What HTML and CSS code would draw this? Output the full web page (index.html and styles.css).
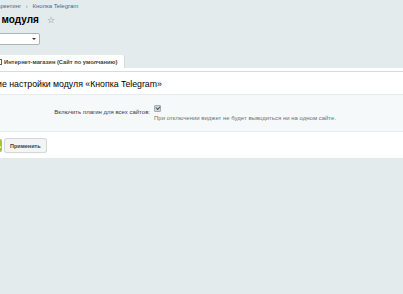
FILE: index.html
```html
<!DOCTYPE html>
<html lang="ru">
<head>
    <meta charset="UTF-8">
    <title>Настройки модуля</title>
    <link rel="stylesheet" href="styles.css">
</head>
<body>
    <div class="admin">
        <div class="crumbs">
            <a href="#">Маркетинг</a> <span class="sep">›</span> <a href="#">Кнопка Telegram</a>
        </div>

        <h1 class="title">Настройки модуля <span class="star">☆</span></h1>

        <div class="site-select">
            <span class="site-name">Интернет-магазин</span>
            <span class="arrow"></span>
        </div>

        <div class="tabs">
            <span class="tab"><span class="tab-icon"></span>Интернет-магазин (Сайт по умолчанию)</span>
        </div>

        <div class="panel">
            <h2 class="panel-title">Общие настройки модуля «Кнопка Telegram»</h2>

            <div class="field-row">
                <div class="field-label">Включить плагин для всех сайтов:</div>
                <div class="field-value">
                    <span class="check"></span>
                    <div class="hint">При отключении виджет не будет выводиться ни на одном сайте.</div>
                </div>
            </div>

            <div class="buttons">
                <button class="btn btn-save" type="button">Сохранить</button>
                <button class="btn" type="button">Применить</button>
            </div>
        </div>
    </div>
</body>
</html>
```

FILE: styles.css
```css
html, body {
    margin: 0;
    height: 100%;
}

body {
    background-color: #e4ebed;
    font-family: "Liberation Sans", Arial, sans-serif;
    color: #000;
    overflow: hidden;
}

.admin {
    padding-top: 2px;
}

/* breadcrumbs */
.crumbs {
    margin-left: -8px;
    font-size: 6px;
    line-height: 8px;
    color: #7a8a96;
    white-space: nowrap;
}

.crumbs a {
    color: #3e6a96;
    text-decoration: none;
}

.crumbs .sep {
    margin: 0 3px;
}

/* page title */
.title {
    margin: 4px 0 0 -54px;
    font-size: 10px;
    line-height: 12px;
    font-weight: bold;
    white-space: nowrap;
}

.star {
    margin-left: 5px;
    font-size: 9px;
    font-weight: normal;
    color: #6f7c85;
}

/* site switch */
.site-select {
    display: flex;
    align-items: center;
    margin: 7px 0 0 -60px;
    width: 98px;
    height: 10px;
    background-color: #fff;
    border: 1px solid #a9b5bb;
    border-radius: 2px;
    font-size: 6px;
    color: #222;
}

.site-name {
    flex: 1;
    padding-left: 3px;
}

.arrow {
    width: 0;
    height: 0;
    margin-right: 3px;
    border-left: 2px solid transparent;
    border-right: 2px solid transparent;
    border-top: 2px solid #333;
}

/* tabs */
.tabs {
    display: flex;
    margin-top: 10px;
    margin-left: -7px;
}

.tab {
    display: flex;
    align-items: center;
    height: 13px;
    padding: 0 7px 0 3px;
    background-color: #fff;
    border-right: 1px solid #d3dde0;
    border-radius: 0 2px 0 0;
    font-size: 5.75px;
    font-weight: bold;
    color: #3b3f42;
    white-space: nowrap;
}

.tab-icon {
    width: 4px;
    height: 4px;
    margin-right: 2px;
    border: 1px solid #5b6066;
}

/* panel */
.panel {
    margin-left: -30px;
    background-color: #fff;
    padding-top: 3px;
}

.panel-title {
    margin: 0;
    padding: 6px 0 4px 8px;
    border-top: 1px solid #d3dde0;
    font-size: 8.75px;
    line-height: 12px;
    font-weight: normal;
    color: #000;
    white-space: nowrap;
}

.field-row {
    display: flex;
    padding: 10px 0 9px;
    background-color: #f5f9f9;
    border-top: 1px solid #e4ecee;
    border-bottom: 1px solid #e4ecee;
}

.field-label {
    width: 180px;
    padding-top: 4px;
    padding-right: 4px;
    text-align: right;
    font-size: 6px;
    line-height: 7px;
    color: #3a3a3a;
}

.field-value {
    font-size: 6px;
    line-height: 7px;
}

.check {
    position: relative;
    display: block;
    width: 5px;
    height: 5px;
    background-color: #cfd6da;
    border: 1px solid #a4adb3;
    border-radius: 1px;
}

.check::after {
    content: "";
    position: absolute;
    left: 1px;
    top: 0;
    width: 3px;
    height: 2px;
    border-left: 1px solid #4d555a;
    border-bottom: 1px solid #4d555a;
    transform: rotate(-45deg);
}

.hint {
    margin-top: 3px;
    color: #6e7478;
    white-space: nowrap;
}

.buttons {
    display: flex;
    gap: 3px;
    padding: 7px 0 6px;
}

.btn {
    height: 13px;
    padding: 0 5px;
    background-color: #f3f5f5;
    border: none;
    border-radius: 2px;
    box-shadow: 0 0 0 1px #d2d9dc, 0 1px 1px #c3cbce;
    font-family: "Liberation Sans", Arial, sans-serif;
    font-size: 5.5px;
    font-weight: bold;
    color: #3c4246;
}

.btn-save {
    width: 32px;
    padding: 0 2px;
    overflow: hidden;
    background-color: #a4c43c;
    box-shadow: none;
    color: #fff;
    text-align: left;
    white-space: nowrap;
}
```
